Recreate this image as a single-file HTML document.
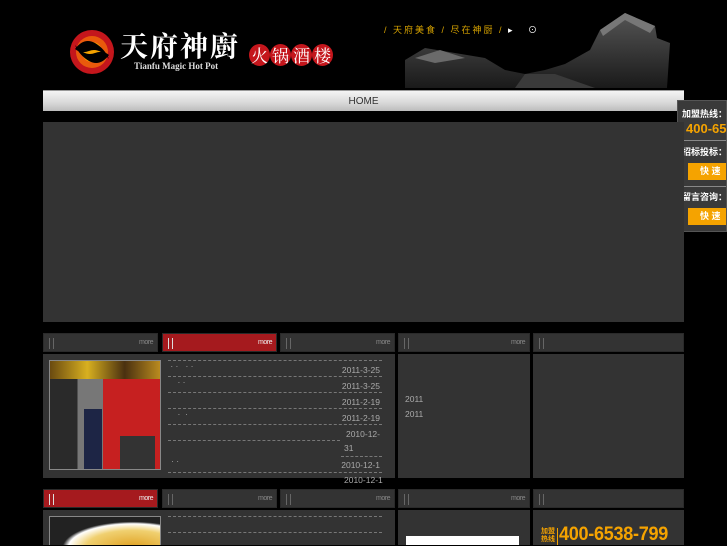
<!DOCTYPE html>
<html><head><meta charset="utf-8"><style>
*{margin:0;padding:0;box-sizing:border-box}
body{width:727px;height:545px;background:#000;overflow:hidden;position:relative;font-family:"Liberation Sans","Noto Sans CJK SC",sans-serif}
.abs{position:absolute}
.nav{left:43px;top:90px;width:641px;height:21px;background:linear-gradient(#f4f4f4,#d8d8d8 60%,#bcbcbc);border-top:1px solid #999;text-align:center;font-size:10px;color:#333;line-height:21px}
.tab{height:19px;background:#333;border:1px solid #2a2a2a}
.tab.red{background:#a51a1e}
.tab:before{content:"";position:absolute;left:5px;top:4px;width:3px;height:11px;border-left:1px solid #666;border-right:1px solid #666}
.tab.red:before{border-color:#ddd}
.tab span{position:absolute;right:4px;top:5px;font-size:7px;color:#888;letter-spacing:-0.5px}
.tab.red span{color:#eee}
.panel{background:#333}
.li{position:absolute;left:168px;width:214px;border-top:1px dashed #777;height:16px;font-size:8.5px;color:#aaa}
.li b{position:absolute;right:2px;top:4px;font-weight:normal}
.cn{font-family:"Noto Serif CJK SC","Liberation Serif",serif}
.fw{white-space:nowrap;overflow:hidden}
</style></head><body>
<!-- logo -->
<svg class="abs" style="left:69px;top:29px" width="46" height="46" viewBox="0 0 46 46">
<circle cx="23" cy="23" r="22" fill="#c4161c"/><circle cx="23" cy="23" r="16" fill="#e95a0c"/><circle cx="23" cy="23" r="10" fill="#f5a300"/>
<path d="M6 20 Q15 8 26 14 Q36 20 40 30 Q30 18 20 22 Q12 25 6 20Z" fill="#000"/>
<path d="M40 26 Q31 38 20 32 Q10 26 6 16 Q16 28 26 24 Q34 21 40 26Z" fill="#000"/>
</svg>
<div class="abs cn" style="left:120px;top:29px;color:#fff;font-size:28px;font-weight:bold;letter-spacing:2px;line-height:32px">天府神廚</div>
<div class="abs" style="left:134px;top:61px;color:#ddd;font-size:9px;font-family:'Liberation Serif',serif;font-weight:bold">Tianfu Magic Hot Pot</div>
<div class="abs" style="left:249px;top:44px;display:flex;gap:0">
<span class="cn" style="display:inline-block;width:21px;height:22px;border-radius:50%;background:#c4161c;color:#fff;font-size:17px;text-align:center;line-height:22px">火</span><span class="cn" style="display:inline-block;width:21px;height:22px;border-radius:50%;background:#c4161c;color:#fff;font-size:17px;text-align:center;line-height:22px">锅</span><span class="cn" style="display:inline-block;width:21px;height:22px;border-radius:50%;background:#c4161c;color:#fff;font-size:17px;text-align:center;line-height:22px">酒</span><span class="cn" style="display:inline-block;width:21px;height:22px;border-radius:50%;background:#c4161c;color:#fff;font-size:17px;text-align:center;line-height:22px">楼</span></div>
<!-- banner image placeholder -->
<svg class="abs" style="left:395px;top:8px" width="285" height="82" viewBox="0 0 285 82">
<defs><linearGradient id="g" x1="0" y1="0" x2="0" y2="1"><stop offset="0" stop-color="#555"/><stop offset="1" stop-color="#1a1a1a"/></linearGradient></defs>
<path d="M10 52 L30 40 L60 45 L90 50 L110 62 L130 66 L150 62 L170 56 L195 42 L205 22 L230 5 L260 18 L262 30 L275 35 L272 80 L10 80Z" fill="url(#g)"/>
<path d="M130 66 L160 66 L200 80 L120 80Z" fill="#3a3a3a"/>
<path d="M205 22 L230 5 L260 18 L255 25 L230 12 L208 28Z" fill="#777"/>
<path d="M20 50 L45 42 L70 50 L40 55Z" fill="#6a6a6a"/>
</svg>
<div class="abs" style="left:384px;top:23px;color:#d9a400;font-size:9px;letter-spacing:2px">/ 天府美食 / 尽在神厨 / <span style="color:#fff">▸ &nbsp; ⊙</span></div>
<div class="abs nav">HOME</div>
<!-- float -->
<div class="abs fw" style="left:677px;top:100px;width:50px;height:132px;background:#3a3a3a;border:1px solid #555">
<div style="color:#fff;font-size:9px;margin:6px 0 0 4px;font-weight:bold">加盟热线：</div>
<div style="color:#f5a300;font-size:13px;font-weight:bold;margin:1px 0 0 8px">400-65</div>
<div style="border-top:1px solid #888;margin:4px 0 0 4px"></div>
<div style="color:#fff;font-size:9px;margin:4px 0 0 4px;font-weight:bold">招标投标：</div>
<div style="background:#f5a300;color:#fff;font-size:9px;margin:5px 0 0 10px;height:17px;line-height:17px;padding-left:12px;font-weight:bold">快 速</div>
<div style="border-top:1px solid #888;margin:6px 0 0 4px"></div>
<div style="color:#fff;font-size:9px;margin:3px 0 0 4px;font-weight:bold">留言咨询：</div>
<div style="background:#f5a300;color:#fff;font-size:9px;margin:5px 0 0 10px;height:17px;line-height:17px;padding-left:12px;font-weight:bold">快 速</div>
</div>
<div class="abs panel" style="left:43px;top:122px;width:641px;height:200px"></div>
<!-- tabs row 1 -->
<div class="abs tab" style="left:43px;top:333px;width:115px"><span>more</span></div>
<div class="abs tab red" style="left:162px;top:333px;width:115px"><span>more</span></div>
<div class="abs tab" style="left:280px;top:333px;width:115px"><span>more</span></div>
<div class="abs tab" style="left:398px;top:333px;width:132px"><span>more</span></div>
<div class="abs tab" style="left:533px;top:333px;width:151px"></div>
<div class="abs panel" style="left:43px;top:354px;width:352px;height:124px"></div>
<div class="abs panel" style="left:398px;top:354px;width:132px;height:124px"></div>
<div class="abs panel" style="left:533px;top:354px;width:151px;height:124px"></div>
<div class="abs" style="left:49px;top:360px;width:112px;height:110px;border:1px solid #888;background:linear-gradient(90deg,#2a2a2a 0 25%,#777 25% 48%,#c62020 48% 100%);overflow:hidden">
<div style="position:absolute;left:0;top:0;width:112px;height:18px;background:linear-gradient(90deg,#6a4a10,#d8b020,#4a3010,#c09020)"></div>
<div style="position:absolute;left:34px;top:48px;width:18px;height:60px;background:#1d2545"></div>
<div style="position:absolute;left:70px;top:75px;width:35px;height:34px;background:#333"></div>
</div>
<div class="li" style="top:360px">&nbsp;· · &nbsp; · ·<b>2011-3-25</b></div>
<div class="li" style="top:376px">&nbsp;&nbsp;&nbsp; · ·<b>2011-3-25</b></div>
<div class="li" style="top:392px"><b>2011-2-19</b></div>
<div class="li" style="top:408px">&nbsp;&nbsp;&nbsp; · &nbsp;·<b>2011-2-19</b></div>
<div class="li" style="top:424px;height:32px"><b>2010-12-</b></div>
<div class="abs" style="left:168px;top:440px;width:172px;border-top:1px dashed #777"></div>
<div class="abs" style="left:344px;top:443px;font-size:8.5px;color:#aaa">31</div>
<div class="li" style="top:456px;width:214px;border-top:none"><b>2010-12-1</b><span style="position:absolute;left:3px;top:0">· ·</span></div>
<div class="abs" style="left:341px;top:456px;width:41px;border-top:1px dashed #777"></div>
<div class="abs" style="left:344px;top:475px;font-size:8.5px;color:#aaa">2010-12-1</div>
<div class="abs" style="left:168px;top:472px;width:214px;border-top:1px dashed #777"></div>
<div class="abs" style="left:405px;top:394px;font-size:8.5px;color:#aaa">2011</div>
<div class="abs" style="left:405px;top:409px;font-size:8.5px;color:#aaa">2011</div>
<!-- row2 -->
<div class="abs" style="left:0;top:485px;width:727px;height:4px;background:#000"></div>
<div class="abs tab red" style="left:43px;top:489px;width:115px"><span>more</span></div>
<div class="abs tab" style="left:162px;top:489px;width:115px"><span>more</span></div>
<div class="abs tab" style="left:280px;top:489px;width:115px"><span>more</span></div>
<div class="abs tab" style="left:398px;top:489px;width:132px"><span>more</span></div>
<div class="abs tab" style="left:533px;top:489px;width:151px"></div>
<div class="abs panel" style="left:43px;top:510px;width:352px;height:35px"></div>
<div class="abs panel" style="left:398px;top:510px;width:132px;height:35px"></div>
<div class="abs panel" style="left:533px;top:510px;width:151px;height:35px"></div>
<div class="abs" style="left:49px;top:516px;width:112px;height:29px;border:1px solid #888;border-bottom:none;background:radial-gradient(ellipse at 75% 110%,#e0a020 0,#f0d070 40%,#fff 55%,#222 60%)"></div>
<div class="abs" style="left:168px;top:516px;width:214px;border-top:1px dashed #777"></div>
<div class="abs" style="left:168px;top:532px;width:214px;border-top:1px dashed #777"></div>
<div class="abs" style="left:406px;top:536px;width:113px;height:9px;background:#fff"></div>
<div class="abs" style="left:541px;top:528px;font-size:7px;color:#f5a300;line-height:8px;font-weight:bold">加盟<br>热线</div>
<div class="abs" style="left:557px;top:528px;height:17px;border-left:1px solid #f5a300"></div>
<div class="abs" style="left:559px;top:524px;font-size:19px;color:#f5a300;font-weight:bold;letter-spacing:-0.3px;transform:scaleX(0.95);transform-origin:left">400-6538-799</div>
</body></html>
